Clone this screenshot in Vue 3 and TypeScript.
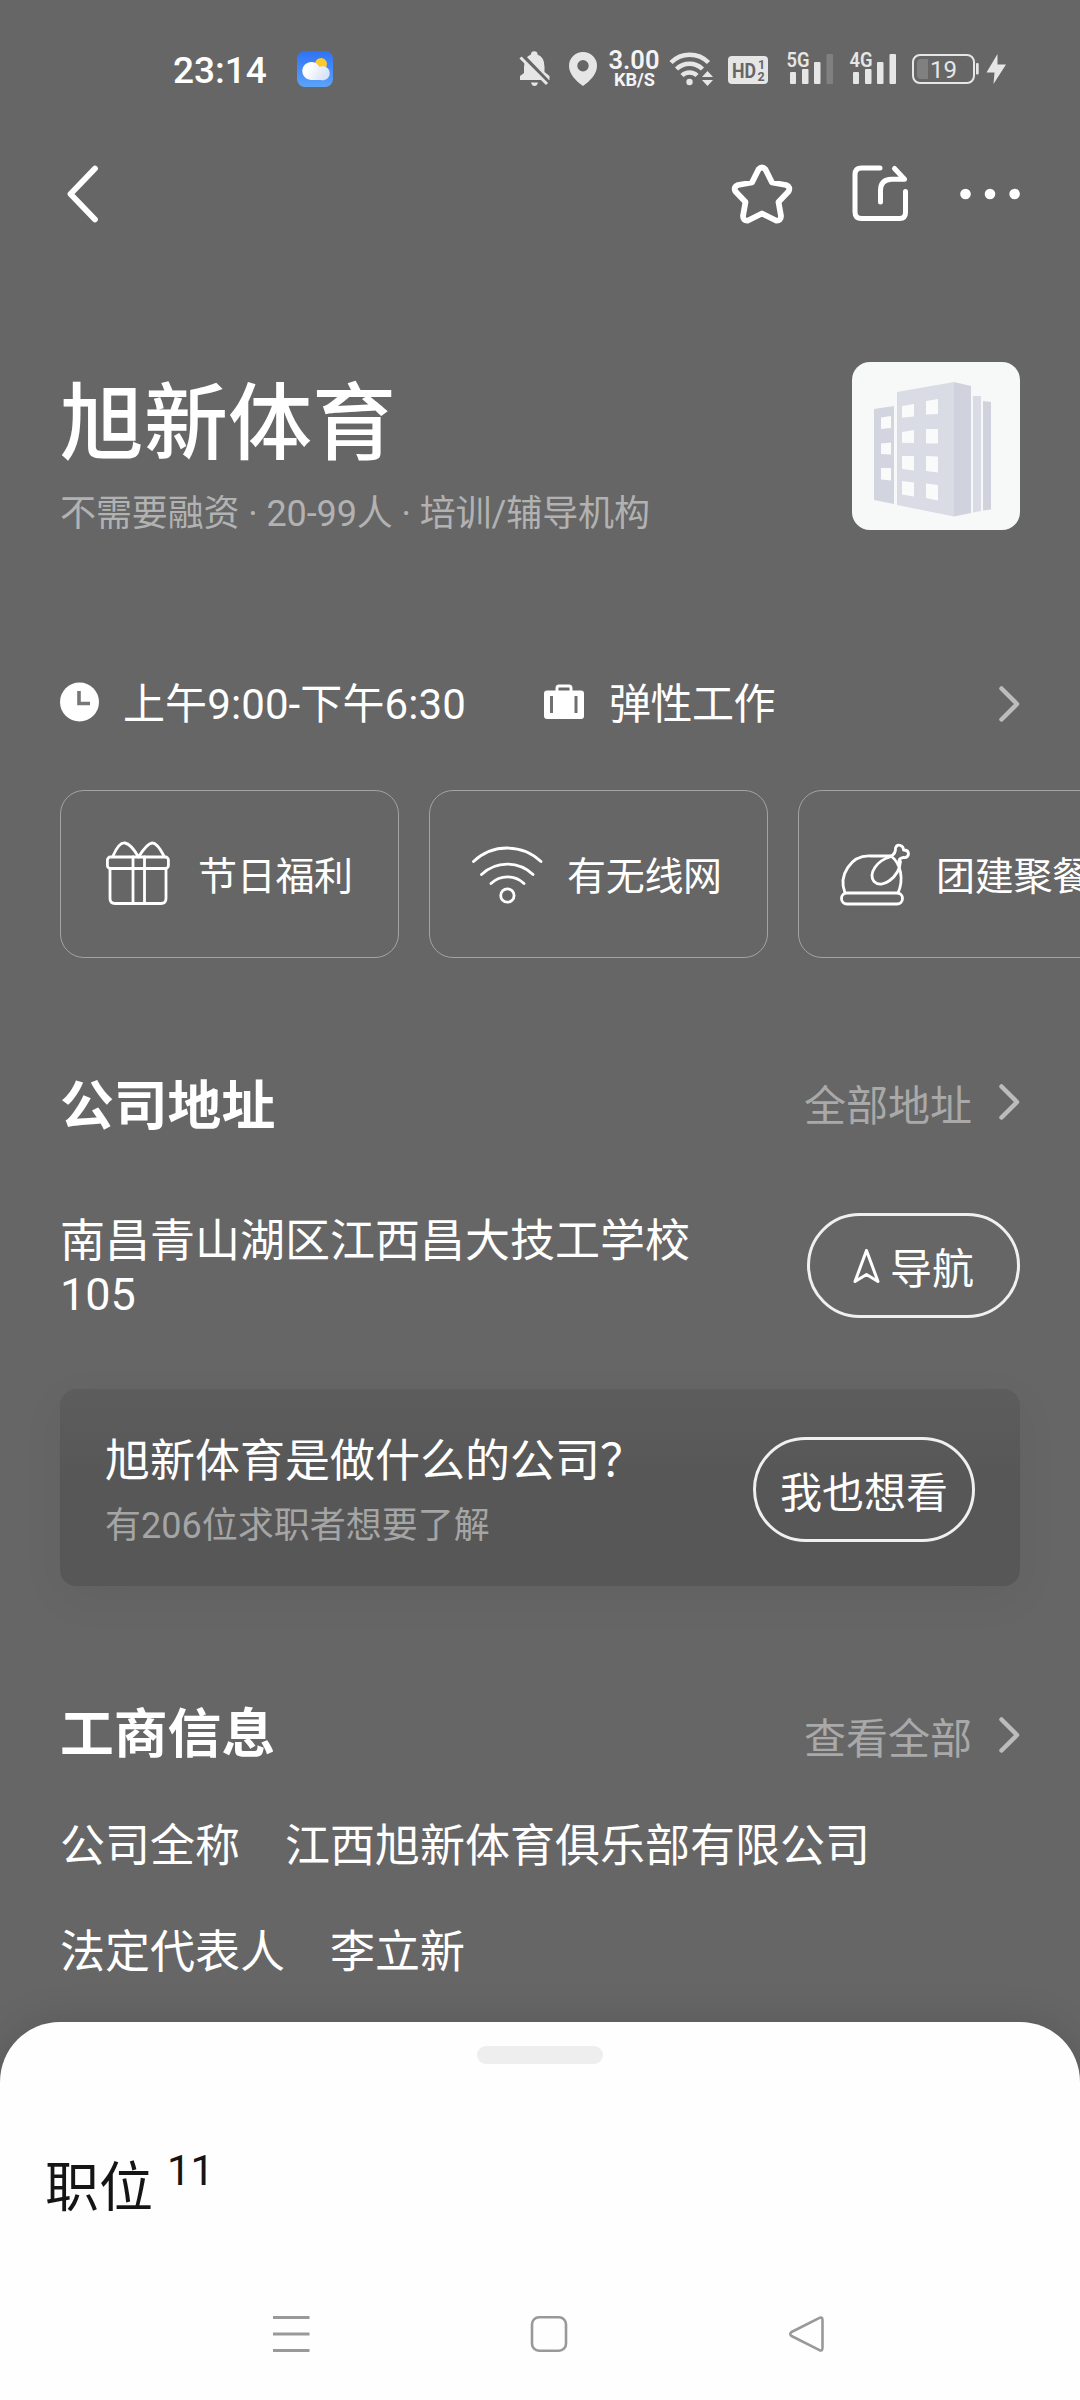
<script setup lang="ts">
interface InfoRow {
  label: string
  value: string
}

interface Benefit {
  icon: 'gift' | 'wifi' | 'meal'
  label: string
}

const benefits: Benefit[] = [
  { icon: 'gift', label: '节日福利' },
  { icon: 'wifi', label: '有无线网' },
  { icon: 'meal', label: '团建聚餐' },
]

const infoRows: InfoRow[] = [
  { label: '公司全称', value: '江西旭新体育俱乐部有限公司' },
  { label: '法定代表人', value: '李立新' },
]
</script>

<template>
  <div class="page">
    <header class="status">
      <span class="time">23:14</span>
      <svg class="weather" width="36" height="36" viewBox="0 0 36 36">
        <defs>
          <linearGradient id="sky" x1="0" y1="0" x2="0" y2="1">
            <stop offset="0" stop-color="#2f72f6" />
            <stop offset="1" stop-color="#5ca3fa" />
          </linearGradient>
          <linearGradient id="cloud" x1="0" y1="0" x2="1" y2="0.4">
            <stop offset="0.3" stop-color="#ffffff" />
            <stop offset="1" stop-color="#d8e4f8" />
          </linearGradient>
        </defs>
        <rect width="36" height="36" rx="8" fill="url(#sky)" />
        <circle cx="24" cy="13" r="6" fill="#fdc92f" />
        <path d="M14 29a9 9 0 1 1 6.500-15.500A9 9 0 0 1 22.500 16a7 7 0 1 1 1.500 13z" fill="url(#cloud)" />
      </svg>
      <svg class="sys" width="492" height="46" viewBox="518 46 492 46" fill="#e6e6e6">
        <!-- muted bell -->
        <path d="M524 73V67q0-10 7-12.500a3.200 3.200 0 0 1 6.500 0q7 2.500 7 12.500v5l5 4v4H520v-4z" />
        <path d="M531 82.500h7q-1 3.500-3.500 3.500t-3.500-3.500z" />
        <path d="M522 55l26 27" stroke="#666" stroke-width="4" />
        <path d="M520.500 57.500l26.500 26.500" stroke="#e6e6e6" stroke-width="3" />
        <!-- location -->
        <path fill-rule="evenodd" d="M583 52a14 14 0 0 1 14 14c0 8-7 15-14 20-7-5-14-12-14-20a14 14 0 0 1 14-14zm0 8a5.700 5.700 0 1 0 0 11.400 5.700 5.700 0 0 0 0-11.400z" />
        <text x="634" y="69" text-anchor="middle" font-size="25" font-weight="600" textLength="51" lengthAdjust="spacingAndGlyphs" fill="#f4f4f4">3.00</text>
        <text x="634.500" y="86" text-anchor="middle" font-size="17.500" font-weight="700" textLength="41" lengthAdjust="spacingAndGlyphs" fill="#f4f4f4">KB/S</text>
        <!-- wireless -->
        <g fill="none" stroke="#e6e6e6" stroke-width="4.500">
          <path d="M671 62.500a26.500 26.500 0 0 1 37.500 0" />
          <path d="M676.500 69a18.500 18.500 0 0 1 26 0" />
          <path d="M682 75.500a10.800 10.800 0 0 1 15 0" />
        </g>
        <circle cx="689.500" cy="82" r="3.200" />
        <path d="M707.500 71l5.500 6h-11zM707.500 86l5.500-6h-11z" />
        <!-- HD voice -->
        <rect x="728" y="56" width="40" height="28" rx="4" />
        <g fill="#666" font-weight="700">
          <text x="732" y="77.500" font-size="21" textLength="24" lengthAdjust="spacingAndGlyphs">HD</text>
          <text x="758" y="69" font-size="12.500">1</text>
          <text x="757.500" y="80.500" font-size="12.500">2</text>
        </g>
        <!-- signals -->
        <g font-size="21" font-weight="600">
          <text x="786.500" y="67" textLength="23" lengthAdjust="spacingAndGlyphs">5G</text>
          <text x="849.500" y="67" textLength="23" lengthAdjust="spacingAndGlyphs">4G</text>
        </g>
        <rect x="790" y="72" width="6" height="12" rx="1" />
        <rect x="802" y="69" width="6.500" height="15" rx="1" />
        <rect x="814" y="62" width="6.500" height="22" rx="1" />
        <rect x="826.500" y="54" width="6.500" height="30" rx="1" fill="#808080" />
        <rect x="853" y="72" width="6" height="12" rx="1" />
        <rect x="865" y="69" width="6.500" height="15" rx="1" />
        <rect x="877" y="62" width="6.500" height="22" rx="1" />
        <rect x="889.500" y="54" width="6.500" height="30" rx="1" />
        <!-- battery -->
        <rect x="913" y="55" width="61" height="28" rx="7" fill="none" stroke="#e6e6e6" stroke-width="2" />
        <path d="M928 59v20h-7q-4 0-4-4V63q0-4 4-4z" fill="#808080" />
        <rect x="976" y="63" width="2.700" height="11.500" rx="1" />
        <text x="943.500" y="78" text-anchor="middle" font-size="24.500" font-weight="400" textLength="27" lengthAdjust="spacingAndGlyphs">19</text>
        <path d="M997.500 54l-11 18.500h8l-1 11.500 12.500-19.500h-8.500z" />
      </svg>
    </header>

    <nav class="toolbar">
      <svg width="32" height="58" viewBox="0 0 32 58" fill="none" stroke="#fff" stroke-width="5.800" stroke-linecap="round" stroke-linejoin="round">
        <path d="M28 3.500L3.500 29 28 54.500" />
      </svg>
      <div class="tools">
        <svg class="star" width="60" height="60" viewBox="732 164 60 60" fill="none" stroke="#fff" stroke-width="5.800" stroke-linejoin="round">
          <path d="M758.500 169.500q3.500-4 7 0L772 182.500l14 2.500q5 2 2.500 6.500L778.500 202l2.500 14q0 5-5 4.500L762 213.500l-14 7q-5 .5-5-4.500l2.500-14L735.500 191.500q-2.500-4.500 2.500-6.500L752 182.500z" />
        </svg>
        <svg class="share" width="56" height="58" viewBox="851.500 165.500 56 58" fill="none" stroke="#fff" stroke-width="5" stroke-linecap="round">
          <path d="M879.500 168.500H861q-6.500 0-6.500 6.500V212.500q0 6.500 6.500 6.500h38q6 0 6-6V192" />
          <path d="M880 202.500V191q0-11 11-11.300h13L894 169" stroke-linejoin="round" />
        </svg>
        <svg width="60" height="12" viewBox="960 188 60 12" fill="#fff">
          <circle cx="965.500" cy="194" r="5.300" />
          <circle cx="990" cy="194" r="5.300" />
          <circle cx="1014.600" cy="194" r="5.300" />
        </svg>
      </div>
    </nav>

    <section class="company">
      <div class="company-text">
        <h1>旭新体育</h1>
        <p>不需要融资 · 20-99人 · 培训/辅导机构</p>
      </div>
      <svg class="logo" width="168" height="168" viewBox="0 0 168 168">
        <rect width="168" height="168" rx="18" fill="#f7f8f8" />
        <path d="M22 47l20-3v98l-20-4z" fill="#d2d5df" />
        <path d="M45 30l57-10v134.500L45 143z" fill="#d9dce5" />
        <path d="M102 20l17 4v127l-17 3.500z" fill="#d0d3de" />
        <path d="M121 34h8v115l-8 1.500z" fill="#d9dce5" />
        <path d="M131 39l8 1v107.500l-8 1z" fill="#d0d3de" />
        <path d="M29 55.500l10-1.500v12l-10 1zM29 81.500l10-1v12l-10-.500zM29 106h10v12.500l-10-1zM50 44l12-2v12.500l-12 1.200zM50 70l12-2v13l-12-.300zM50 94h12v14.500l-12-1.500zM50 119l12 1.500v14L50 132.500zM74 39l12-2v15l-12 .600zM74 67h12v14.500H74zM74 94l12 .600v16L74 109zM74 121.500l12 1.500v15.500L74 136z" fill="#f9fafa" />
      </svg>
    </section>

    <section class="hours">
      <svg width="40" height="40" viewBox="0 0 40 40">
        <circle cx="19.500" cy="20" r="19.500" fill="#fff" />
        <path d="M19 9v12.500h11" fill="none" stroke="#777" stroke-width="3.600" />
      </svg>
      <span class="hours-time">上午9:00-下午6:30</span>
      <svg class="case" width="40" height="36" viewBox="0 0 40 36">
        <path d="M13 7V4q0-2 2-2h10q2 0 2 2v3" fill="none" stroke="#fff" stroke-width="3" />
        <rect x="0" y="6.500" width="40" height="28.500" rx="3" fill="#fff" />
        <path d="M7.500 12v17M32 12v17" stroke="#707070" stroke-width="3" />
      </svg>
      <span class="hours-type">弹性工作</span>
      <svg class="chev" width="21" height="36" viewBox="0 0 21 36"><path d="M2.500 2.500L18 18 2.500 33.500" /></svg>
    </section>

    <section class="benefits">
      <div v-for="b in benefits" :key="b.label" class="benefit">
        <svg width="72" height="72" viewBox="0 0 72 72" fill="none" stroke="#fff" stroke-width="2.800" stroke-linecap="round" stroke-linejoin="round">
          <g v-if="b.icon === 'gift'">
            <rect x="2.400" y="19" width="61" height="11.500" rx="3" />
            <path d="M5 30.500v30q0 5 5 5h46q5 0 5-5v-30M28 19v46.500M39.500 19v46.500" />
            <path d="M8 18q6-14 12-13t13.500 14Q42 5.500 47 5t12 13" />
          </g>
          <g v-else-if="b.icon === 'wifi'" transform="translate(-4.500 0)">
            <path d="M4 23.500a49 49 0 0 1 67.500 0" />
            <path d="M12 36.500a37 37 0 0 1 51.500 0" />
            <path d="M21.500 45.500a24 24 0 0 1 33 0" />
            <circle cx="37.900" cy="57.500" r="6.700" />
          </g>
          <g v-else transform="translate(-6 1.500)">
            <rect x="4.500" y="53.500" width="61" height="11" rx="5.500" />
            <path d="M8 53.500C1 36 14 15 34 16.500h20C64 24 67 40 61 53.500" />
            <path d="M53 17.500C40 21 31 34 37 42c8 8 25-4 26.500-20" />
            <path d="M53 17q6-2 5.500-8.500 1.500-4 5-2.500 3 1 3 4.500 5 0 5 4-.500 4-5 3.500Q60 19 62.500 24" />
          </g>
        </svg>
        <span>{{ b.label }}</span>
      </div>
    </section>

    <section class="heading heading-address">
      <h2>公司地址</h2>
      <a>全部地址<svg class="chev" width="21" height="36" viewBox="0 0 21 36"><path d="M2.500 2.500L18 18 2.500 33.500" /></svg></a>
    </section>

    <section class="address">
      <p>南昌青山湖区江西昌大技工学校105</p>
      <button class="pill nav-btn">
        <svg width="27" height="36" viewBox="0 0 27 36" fill="none" stroke="#fff" stroke-width="3" stroke-linejoin="round">
          <path d="M13.500 2.500L2 33.500l11.500-7 11.500 7z" />
        </svg>
        导航
      </button>
    </section>

    <section class="promo">
      <div class="promo-text">
        <h3>旭新体育是做什么的公司？</h3>
        <p>有206位求职者想要了解</p>
      </div>
      <button class="pill want-btn">我也想看</button>
    </section>

    <section class="heading heading-info">
      <h2>工商信息</h2>
      <a>查看全部<svg class="chev" width="21" height="36" viewBox="0 0 21 36"><path d="M2.500 2.500L18 18 2.500 33.500" /></svg></a>
    </section>

    <dl class="info">
      <div v-for="row in infoRows" :key="row.label">
        <dt>{{ row.label }}</dt>
        <dd>{{ row.value }}</dd>
      </div>
    </dl>

    <section class="sheet">
      <div class="handle"></div>
      <div class="jobs"><span>职位</span><sup>11</sup></div>
      <div class="keys">
        <svg width="38" height="38" viewBox="272 2315 38 38" fill="none" stroke="#999" stroke-width="3">
          <path d="M273 2317.500h36.500M273 2334h36.500M273 2350.500h36.500" />
        </svg>
        <svg width="38" height="38" viewBox="530 2315 38 38" fill="none" stroke="#999" stroke-width="2.600">
          <rect x="532" y="2317.300" width="34" height="33.400" rx="7" />
        </svg>
        <svg width="38" height="38" viewBox="788 2315 38 38" fill="none" stroke="#999" stroke-width="2.600">
          <path d="M819 2318.200q3.500-2 3.500 2v27.600q0 4-3.500 2L791.500 2336q-2.500-2 0-4z" stroke-linejoin="round" />
        </svg>
      </div>
    </section>
  </div>
</template>

<style>
body {
  background: #666;
}
</style>

<style scoped>
.page {
  display: flex;
  flex-direction: column;
  width: 1080px;
  height: 2400px;
  overflow: hidden;
  background: #666;
  color: #fff;
  font-family: Roboto, 'Noto Sans CJK SC', sans-serif;
}

.page > * {
  flex: none;
}

svg {
  display: block;
  flex: none;
  overflow: visible;
}

h1,
h2,
h3,
p,
dl,
dd {
  margin: 0;
}

.status {
  display: flex;
  align-items: center;
  height: 138px;
  padding-left: 173px;
  box-sizing: border-box;
}

.time {
  width: 124px;
  padding-top: 3px;
  font-size: 37px;
  font-weight: 500;
  line-height: 40px;
}

.sys {
  margin-left: 185px;
}

.toolbar {
  display: flex;
  align-items: center;
  justify-content: space-between;
  height: 112px;
  padding: 0 60px 0 67px;
}

.tools {
  display: flex;
  align-items: center;
}

.share {
  margin: 0 52px 0 60px;
}

.company {
  display: flex;
  justify-content: space-between;
  height: 176px;
  margin-top: 112px;
  padding: 0 60px;
}

.company-text {
  padding-top: 13px;
}

h1 {
  font-size: 84px;
  font-weight: 500;
  line-height: 100px;
}

.company p {
  margin-top: 14px;
  color: #b2b2b2;
  font-size: 36px;
  letter-spacing: -0.1px;
  line-height: 50px;
}

.hours {
  display: flex;
  align-items: center;
  height: 60px;
  margin-top: 134px;
  padding: 0 60px;
  font-size: 42px;
  line-height: 60px;
}

.hours span {
  padding-top: 5px;
}

.hours-time {
  width: 421px;
  margin-left: 23px;
  letter-spacing: 0.1px;
}

.hours .hours-type {
  margin: 0 auto 0 25px;
  letter-spacing: -0.5px;
}

.hours .chev {
  margin-top: 4px;
}

.chev {
  fill: none;
  stroke: #bcbcbc;
  stroke-width: 4.500;
  stroke-linecap: round;
  stroke-linejoin: round;
}

.benefits {
  display: flex;
  gap: 30px;
  margin-top: 58px;
  padding-left: 60px;
}

.benefit {
  display: flex;
  flex: none;
  align-items: center;
  width: 339px;
  height: 168px;
  padding-left: 44px;
  box-sizing: border-box;
  border: 1px solid #a3a3a3;
  border-radius: 24px;
  font-size: 39px;
  letter-spacing: -0.3px;
}

.benefit span {
  margin: -2px 0 0 21px;
}

.heading {
  display: flex;
  align-items: flex-start;
  justify-content: space-between;
  height: 80px;
  margin-top: 108px;
  padding: 0 60px;
}

h2 {
  padding-top: 1px;
  font-size: 53.800px;
  font-weight: 700;
  line-height: 80px;
}

.heading a {
  display: flex;
  align-items: center;
  gap: 27px;
  height: 72px;
  color: #a9a9a9;
  font-size: 42px;
}

.heading-info a {
  height: 82px;
}

.address {
  display: flex;
  justify-content: space-between;
  height: 105px;
  margin-top: 67px;
  padding: 0 60px;
}

.address p {
  width: 660px;
  padding-top: 2px;
  font-size: 45px;
  line-height: 53px;
}

.pill {
  display: flex;
  align-items: center;
  justify-content: center;
  height: 105px;
  padding: 0;
  border: 3px solid #f0f0f0;
  border-radius: 53px;
  box-sizing: border-box;
  background: none;
  color: #fff;
  font: 400 42px Roboto, 'Noto Sans CJK SC', sans-serif;
}

.nav-btn {
  gap: 10px;
  width: 213px;
}

.want-btn {
  width: 222px;
  margin-top: 4px;
}

.promo {
  display: flex;
  align-items: center;
  justify-content: space-between;
  height: 197px;
  margin: 71px 60px 0;
  padding: 0 45px;
  box-sizing: border-box;
  border-radius: 16px;
  background: linear-gradient(#5d5d5d, #575757 45%);
  box-shadow: 0 12px 45px rgba(0, 0, 0, 0.05);
}

.promo-text {
  padding-top: 13px;
}

.promo h3 {
  font-size: 45px;
  font-weight: 400;
  line-height: 64px;
}

.promo p {
  color: #a5a5a5;
  font-size: 36px;
  line-height: 64px;
}

.info {
  margin-top: 43px;
  padding: 0 60px;
  font-size: 45px;
  line-height: 60px;
}

.info div {
  display: flex;
  gap: 45px;
}

.info div + div {
  margin-top: 46px;
}

.sheet {
  display: flex;
  flex-direction: column;
  align-items: center;
  height: 378px;
  margin-top: auto;
  border-radius: 60px 60px 0 0;
  background: #fefefe;
  box-shadow: 0 0 40px rgba(0, 0, 0, 0.13);
  color: #151515;
}

.handle {
  width: 126px;
  height: 18px;
  margin-top: 24px;
  border-radius: 9px;
  background: #eee;
}

.jobs {
  display: flex;
  align-self: flex-start;
  height: 80px;
  margin: 85px 0 0 45px;
  font-size: 54px;
  line-height: 80px;
}

.jobs sup {
  margin-left: 14px;
  font-size: 42px;
  line-height: 44px;
}

.keys {
  display: flex;
  align-self: flex-start;
  gap: 220px;
  margin: 86px 0 0 272px;
}
</style>
